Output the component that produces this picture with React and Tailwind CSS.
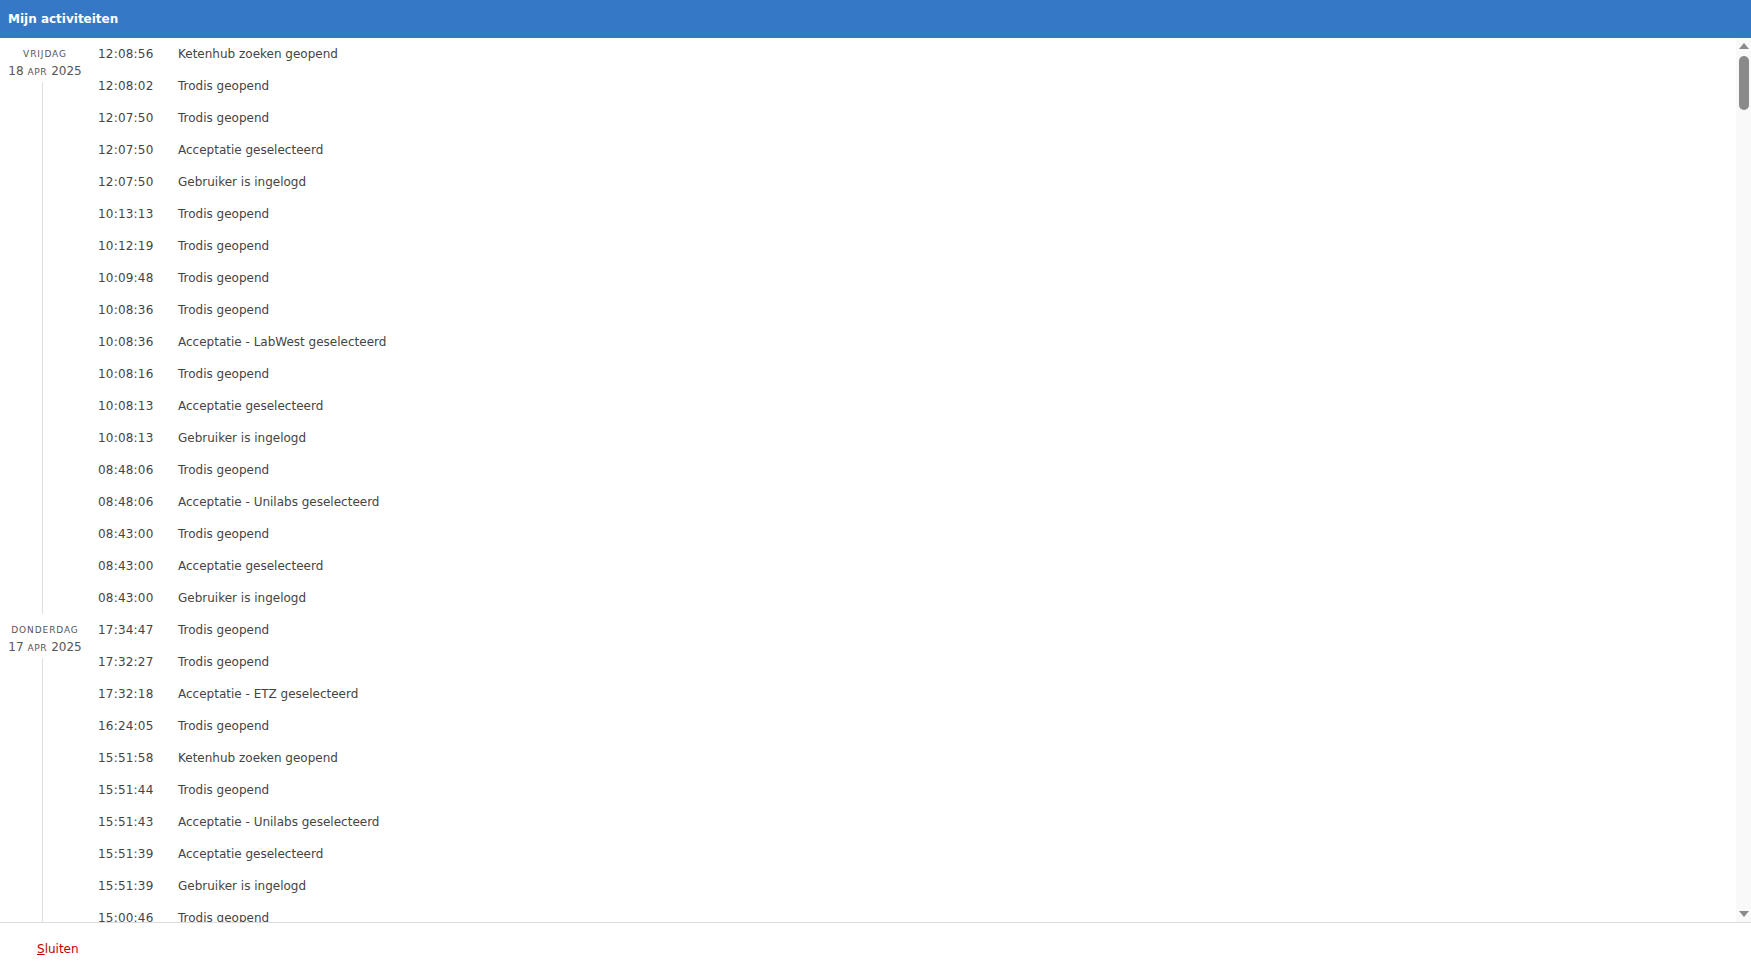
import React from "react";

const groups = [
  {
    day: "Vrijdag",
    num: "18",
    mon: "apr",
    year: "2025",
    rows: [
      ["12:08:56", "Ketenhub zoeken geopend"],
      ["12:08:02", "Trodis geopend"],
      ["12:07:50", "Trodis geopend"],
      ["12:07:50", "Acceptatie geselecteerd"],
      ["12:07:50", "Gebruiker is ingelogd"],
      ["10:13:13", "Trodis geopend"],
      ["10:12:19", "Trodis geopend"],
      ["10:09:48", "Trodis geopend"],
      ["10:08:36", "Trodis geopend"],
      ["10:08:36", "Acceptatie - LabWest geselecteerd"],
      ["10:08:16", "Trodis geopend"],
      ["10:08:13", "Acceptatie geselecteerd"],
      ["10:08:13", "Gebruiker is ingelogd"],
      ["08:48:06", "Trodis geopend"],
      ["08:48:06", "Acceptatie - Unilabs geselecteerd"],
      ["08:43:00", "Trodis geopend"],
      ["08:43:00", "Acceptatie geselecteerd"],
      ["08:43:00", "Gebruiker is ingelogd"],
    ],
  },
  {
    day: "Donderdag",
    num: "17",
    mon: "apr",
    year: "2025",
    rows: [
      ["17:34:47", "Trodis geopend"],
      ["17:32:27", "Trodis geopend"],
      ["17:32:18", "Acceptatie - ETZ geselecteerd"],
      ["16:24:05", "Trodis geopend"],
      ["15:51:58", "Ketenhub zoeken geopend"],
      ["15:51:44", "Trodis geopend"],
      ["15:51:43", "Acceptatie - Unilabs geselecteerd"],
      ["15:51:39", "Acceptatie geselecteerd"],
      ["15:51:39", "Gebruiker is ingelogd"],
      ["15:00:46", "Trodis geopend"],
      ["15:00:40", "Acceptatie geselecteerd"],
      ["15:00:40", "Gebruiker is ingelogd"],
    ],
  },
];

function Group({ g }) {
  return (
    <div className="flex">
      <div className="w-[90px] shrink-0 flex flex-col pt-[11px]">
        <div className="flex justify-center">
          <span className="text-[9px] leading-[10px] tracking-[0.9px] uppercase text-[#555]">
            {g.day}
          </span>
        </div>
        <div className="flex justify-center items-baseline text-[12px] leading-[14px] text-[#555] mt-[5px]">
          <span>{g.num}</span>
          <span className="ml-[4px] text-[9px] uppercase tracking-[0.6px]">{g.mon}</span>
          <span className="ml-[4px]">{g.year}</span>
        </div>
        <div className="flex-1 ml-[42px] mt-[3px] border-l border-[#dddddd]" />
      </div>
      <div className="flex flex-col ml-[8px]">
        {g.rows.map((r, i) => (
          <div key={i} className="h-[32px] flex items-center text-[12px] text-[#444]">
            <span className="w-[80px] tracking-[0.2px]">{r[0]}</span>
            <span>{r[1]}</span>
          </div>
        ))}
      </div>
    </div>
  );
}

export default function App() {
  return (
    <div
      className="h-screen w-full flex flex-col bg-white"
      style={{ fontFamily: '"DejaVu Sans", Verdana, sans-serif' }}
    >
      <div className="h-[38px] shrink-0 bg-[#3578c6] flex items-center px-[8px]">
        <span className="text-white font-bold text-[12px]">Mijn activiteiten</span>
      </div>
      <div className="flex-1 min-h-0 flex border-b border-[#dddddd]">
        <div className="flex-1 overflow-hidden">
          {groups.map((g, i) => (
            <Group key={i} g={g} />
          ))}
        </div>
        <div className="w-[15px] shrink-0 bg-[#f9f9f9] flex flex-col items-center">
          <svg width="10" height="6" viewBox="0 0 10 6" className="mt-[5px]">
            <polygon points="5,0 10,6 0,6" fill="#8a8a8a" />
          </svg>
          <div className="mt-[7px] w-[10px] h-[54px] rounded-full bg-[#8a8a8a]" />
          <div className="flex-1" />
          <svg width="10" height="6" viewBox="0 0 10 6" className="mb-[5px]">
            <polygon points="0,0 10,0 5,6" fill="#8a8a8a" />
          </svg>
        </div>
      </div>
      <div className="h-[53px] shrink-0 flex items-center pl-[37px] pb-[2px]">
        <span className="text-[12px] text-[#c00000]">
          <span className="underline">S</span>luiten
        </span>
      </div>
    </div>
  );
}
